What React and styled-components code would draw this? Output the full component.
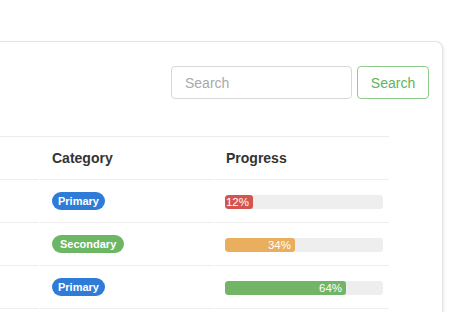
import React from 'react';
import styled, { createGlobalStyle } from 'styled-components';

const GlobalStyle = createGlobalStyle`
  html, body {
    margin: 0;
    padding: 0;
    height: 100%;
    background: #ffffff;
    font-family: "Liberation Sans", Arial, sans-serif;
    overflow: hidden;
  }
`;

const rows = [
  { id: 1, category: 'Primary', tone: 'primary', progress: 12, fill: 17.7, color: '#d35450' },
  { id: 2, category: 'Secondary', tone: 'secondary', progress: 34, fill: 44.3, color: '#e9ae5e' },
  { id: 3, category: 'Primary', tone: 'primary', progress: 64, fill: 76.6, color: '#72b566' },
];

const App = () => {
  return (
    <>
      <GlobalStyle />
      <Card>
        <Toolbar>
          <SearchInput placeholder="Search" />
          <SearchButton>Search</SearchButton>
        </Toolbar>

        <Table>
          <HeaderRow>
            <Cell />
            <HeadCell>Category</HeadCell>
            <HeadCell $progress>Progress</HeadCell>
          </HeaderRow>
          {rows.map((row) => (
            <Row key={row.id}>
              <Cell />
              <Cell>
                <Badge $tone={row.tone}>{row.category}</Badge>
              </Cell>
              <Cell $progress>
                <Track>
                  <Fill style={{ width: `${row.fill}%`, background: row.color }}>
                    {row.progress}%
                  </Fill>
                </Track>
              </Cell>
            </Row>
          ))}
        </Table>
      </Card>
    </>
  );
};

// card runs off the left and bottom of the frame
const Card = styled.div`
  box-sizing: border-box;
  width: 503px;
  height: 271px;
  margin: 41px 0 0 -60px;
  padding: 24px 13px 0 0;
  background: #fff;
  border: 1px solid #e4e4e4;
  border-bottom: 0;
  border-radius: 8px 8px 0 0;
  box-shadow: 1px 1px 3px rgba(0, 0, 0, 0.09);
  overflow: hidden;
`;

const Toolbar = styled.div`
  display: flex;
  justify-content: flex-end;
  gap: 5px;
`;

const SearchInput = styled.input`
  box-sizing: border-box;
  width: 181px;
  height: 33px;
  padding: 0 13px;
  border: 1px solid #d8d8d8;
  border-radius: 4px;
  font-family: inherit;
  font-size: 14px;
  color: #333;
  outline: none;

  &::placeholder {
    color: #a9a9a9;
  }
`;

const SearchButton = styled.button`
  box-sizing: border-box;
  width: 72px;
  height: 33px;
  padding: 0;
  background: #fff;
  border: 1px solid #8fcd8a;
  border-radius: 4px;
  font-family: inherit;
  font-size: 14px;
  color: #5eb45a;
  cursor: pointer;
`;

const Table = styled.div`
  margin: 37px 40px 0 0;
  border-top: 1px solid #ececec;
`;

const HeaderRow = styled.div`
  display: grid;
  grid-template-columns: 99px 175px 1fr;
  height: 43px;
`;

const Row = styled(HeaderRow)``;

const Cell = styled.div`
  display: flex;
  align-items: center;
  padding: ${(p) => (p.$progress ? '0 6px 0 10px' : '0 12px')};
  border-bottom: 1px solid #ededed;
  margin-right: ${(p) => (p.$progress ? '0' : '1px')};
  min-width: 0;
`;

const HeadCell = styled(Cell)`
  padding-left: ${(p) => (p.$progress ? '11px' : '12px')};
  font-size: 14px;
  font-weight: bold;
  color: #333;
`;

const Badge = styled.span`
  display: inline-flex;
  align-items: center;
  height: 18px;
  padding: 0 ${(p) => (p.$tone === 'secondary' ? '8px' : '6px')};
  border-radius: 9px;
  font-size: 11px;
  font-weight: bold;
  color: #fff;
  background: ${(p) => (p.$tone === 'secondary' ? '#6cb664' : '#2f7bd8')};
`;

const Track = styled.div`
  display: flex;
  width: 100%;
  height: 14px;
  margin-top: 1px;
  background: #eeeeee;
  border-radius: 3px;
  overflow: hidden;
`;

const Fill = styled.div`
  box-sizing: border-box;
  display: flex;
  align-items: center;
  justify-content: flex-end;
  padding-right: 4px;
  height: 100%;
  border-radius: 3px;
  font-size: 11.5px;
  color: #fff;
  white-space: nowrap;
`;

export default App;
